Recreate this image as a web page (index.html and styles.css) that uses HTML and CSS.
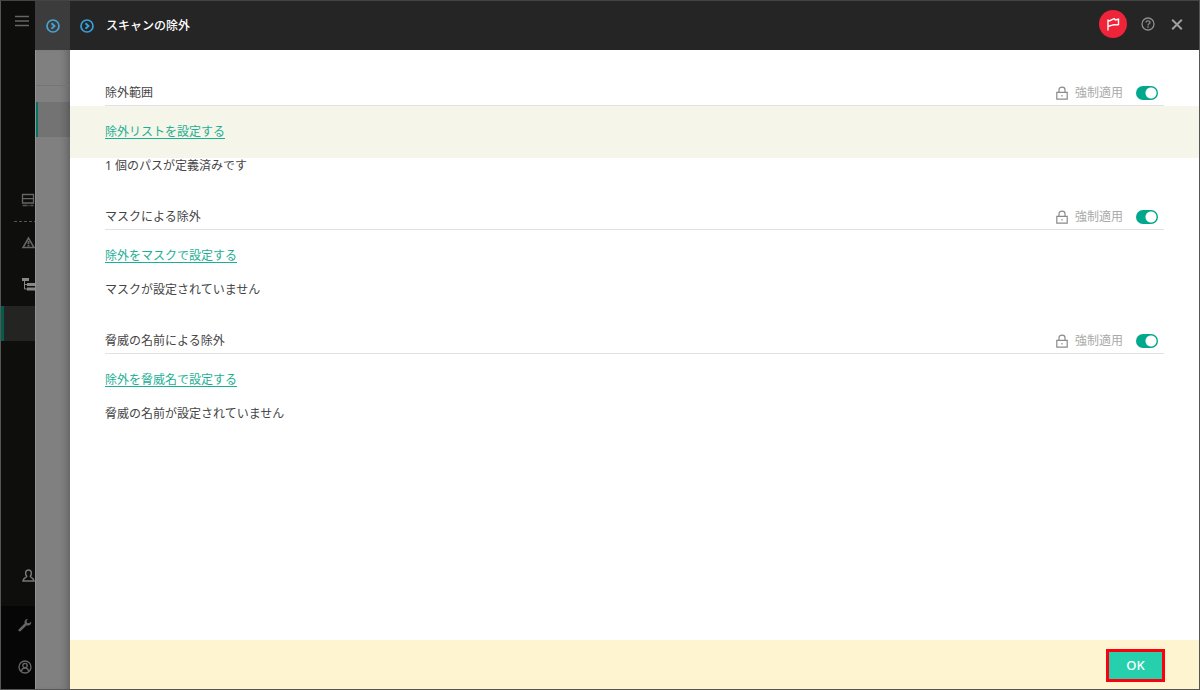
FILE: index.html
```html
<!DOCTYPE html>
<html lang="ja">
<head>
  <meta charset="UTF-8">
  <title>スキャンの除外</title>
  <link rel="stylesheet" href="styles.css">
</head>
<body>
  <div class="app">

    <!-- サイドバー -->
    <nav class="sidebar">
      <button class="icon-btn menu-btn" type="button" aria-label="メニュー">
        <svg width="14" height="12" viewBox="0 0 14 12"><path d="M0 1.500h14M0 6h14M0 10.500h14" stroke="#666" stroke-width="1.600"/></svg>
      </button>
      <ul class="nav-list">
        <li class="nav-item nav-server">
          <svg width="14" height="14" viewBox="0 0 14 14" fill="none" stroke="#666" stroke-width="1.300"><path d="M1.500 1.500h11v8.500h-11zM1.500 5.700h11"/><path d="M1.500 12.500h11" stroke-dasharray="5 1 1 1" stroke="#555"/></svg>
        </li>
        <li class="nav-item nav-alert">
          <svg width="14" height="14" viewBox="0 0 14 14" fill="none" stroke="#666" stroke-width="1.500"><path d="M7.500 2L2 11.500h11z"/><path d="M7.500 5v3M7.500 8.800v1.700" stroke-width="1.800"/></svg>
        </li>
        <li class="nav-item">
          <svg width="14" height="14" viewBox="0 0 14 14" fill="#888"><path d="M1 0h7v3H1zM6 5h8v3H6zM6 9.500h8v3H6z"/><path d="M3.500 3v8H6M3.500 6.500H6" fill="none" stroke="#888"/></svg>
        </li>
        <li class="nav-item active"></li>
      </ul>
      <div class="nav-item nav-user">
        <svg width="14" height="14" viewBox="0 0 14 14" fill="none" stroke="#777" stroke-width="1.500"><path d="M5.800 7.300C3.800 5.500 4.200 1 7.500 1s3.700 4.500 1.700 6.300c0 1 3.800 1.500 3.800 4.700H2c0-3.200 3.800-3.700 3.800-4.700z"/></svg>
      </div>
      <div class="nav-bottom">
        <svg width="14" height="14" viewBox="0 0 14 14"><path d="M1.800 12.200L8 6" stroke="#666" stroke-width="2.600" stroke-linecap="round"/><path d="M9.800 1C7.500 1 6 3 6.800 5.200L9 7.400c2.200.8 4.500-.8 4.300-3.600L11 5.300 9 4.900 8.500 3z" fill="#666"/></svg>
        <svg width="14" height="14" viewBox="0 0 14 14" fill="none" stroke="#666" stroke-width="1.300"><circle cx="7" cy="7" r="6"/><circle cx="7" cy="5.500" r="2.200"/><path d="M3.500 11c.3-2 1.500-3 3.500-3s3.200 1 3.500 3"/></svg>
      </div>
    </nav>

    <!-- 背面のパネル -->
    <div class="layer">
      <div class="layer-head">
        <svg width="14" height="14" viewBox="0 0 14 14" fill="none" stroke="#46a3d4"><circle cx="7" cy="7" r="6" stroke-width="1.700"/><path d="M5.500 4.300L8.500 7l-3 2.700" stroke-width="1.900"/></svg>
      </div>
      <div class="layer-body">
        <div class="layer-top"></div>
        <div class="layer-gap"></div>
        <div class="layer-active"></div>
      </div>
    </div>

    <!-- スキャンの除外 -->
    <main class="panel">
      <header class="panel-head">
        <svg width="14" height="14" viewBox="0 0 14 14" fill="none" stroke="#38a0dc"><circle cx="7" cy="7" r="6" stroke-width="1.700"/><path d="M5.500 4.300L8.500 7l-3 2.700" stroke-width="1.900"/></svg>
        <h1>スキャンの除外</h1>
        <div class="head-actions">
          <button class="icon-btn flag-btn" type="button" aria-label="フラグ">
            <svg width="14" height="14" viewBox="0 0 14 14" fill="none" stroke="#fff" stroke-width="1.400"><path d="M2 2.500V13.500M2 4c3.500-.2 3.500-2 6.500-2.300l.8 1.300 3.200-.8v5.300C9.500 8.700 9 6.800 6 8.200L2 9.500"/></svg>
          </button>
          <button class="icon-btn" type="button" aria-label="ヘルプ">
            <svg width="14" height="14" viewBox="0 0 14 14" fill="none" stroke="#8c8c8c" stroke-width="1.300"><circle cx="7" cy="7" r="6"/><path d="M5 5.600C5 3.200 9 3.200 9 5.500 9 6.900 7 6.800 7 8.400M7 9.300v1.400"/></svg>
          </button>
          <button class="icon-btn" type="button" aria-label="閉じる">
            <svg width="12" height="12" viewBox="0 0 12 12"><path d="M1.200 1.700l9.600 9.600M10.800 1.700L1.200 11.300" stroke="#a0a0a0" stroke-width="2"/></svg>
          </button>
        </div>
      </header>

      <div class="panel-body">
        <section class="group highlight">
          <div class="group-head">
            <h2>除外範囲</h2>
            <label class="enforce">
              <svg width="12" height="14" viewBox="0 0 12 14" fill="none" stroke="#8a8a8a" stroke-width="1.200"><path d="M.8 6.300h10.400v6.900H.8zM3 6V3.700C3 .2 9 .2 9 3.700V6M6 9v1.500"/></svg>
              強制適用
              <input class="toggle" type="checkbox" checked>
            </label>
          </div>
          <div class="group-link"><a href="#">除外リストを設定する</a></div>
          <p>1 個のパスが定義済みです</p>
        </section>

        <section class="group">
          <div class="group-head">
            <h2>マスクによる除外</h2>
            <label class="enforce">
              <svg width="12" height="14" viewBox="0 0 12 14" fill="none" stroke="#8a8a8a" stroke-width="1.200"><path d="M.8 6.300h10.400v6.900H.8zM3 6V3.700C3 .2 9 .2 9 3.700V6M6 9v1.500"/></svg>
              強制適用
              <input class="toggle" type="checkbox" checked>
            </label>
          </div>
          <div class="group-link"><a href="#">除外をマスクで設定する</a></div>
          <p>マスクが設定されていません</p>
        </section>

        <section class="group">
          <div class="group-head">
            <h2>脅威の名前による除外</h2>
            <label class="enforce">
              <svg width="12" height="14" viewBox="0 0 12 14" fill="none" stroke="#8a8a8a" stroke-width="1.200"><path d="M.8 6.300h10.400v6.900H.8zM3 6V3.700C3 .2 9 .2 9 3.700V6M6 9v1.500"/></svg>
              強制適用
              <input class="toggle" type="checkbox" checked>
            </label>
          </div>
          <div class="group-link"><a href="#">除外を脅威名で設定する</a></div>
          <p>脅威の名前が設定されていません</p>
        </section>
      </div>

      <footer class="panel-foot">
        <button class="ok-btn" type="button">OK</button>
      </footer>
    </main>

  </div>
</body>
</html>
```
FILE: styles.css
```css
* {
  box-sizing: border-box;
}

body {
  margin: 0;
  font-family: "Noto Sans", "Noto Sans CJK JP", sans-serif;
  font-size: 12px;
  line-height: 16px;
  color: #444;
}

svg {
  display: block;
  flex: none;
}

h1, h2, p, ul {
  margin: 0;
  padding: 0;
  font-size: 12px;
  font-weight: normal;
}

.app {
  display: grid;
  grid-template-columns: 34px 35px 1fr;
  min-height: 100vh;
  border: 1px solid #555;
  border-top-color: #444;
}

.icon-btn {
  display: flex;
  align-items: center;
  justify-content: center;
  padding: 0;
  border: 0;
  background: none;
  cursor: pointer;
}

/* サイドバー */
.sidebar {
  display: flex;
  flex-direction: column;
  background: #0e0e0c;
}

.menu-btn {
  width: 14px;
  height: 40px;
  margin-left: 14px;
}

.nav-list {
  margin-top: 137px;
  list-style: none;
}

.nav-item {
  display: flex;
  align-items: center;
  justify-content: flex-end;
  height: 42px;
}

.nav-server {
  height: 44px;
  background: linear-gradient(90deg, #555 60%, transparent 0) 0 100% / 5px 1px repeat-x;
  background-origin: content-box;
  background-clip: content-box;
  padding-left: 13px;
}

.nav-item.active {
  height: 35px;
  background: #242422;
  border-left: 3px solid #045c4c;
}

.nav-user {
  margin-top: auto;
  height: 60px;
}

.nav-bottom {
  display: flex;
  flex-direction: column;
  gap: 28px;
  padding: 12px 0 15px 17px;
  background: #060606;
}

/* 背面のパネル */
.layer {
  display: flex;
  flex-direction: column;
}

.layer-head {
  display: flex;
  align-items: center;
  justify-content: center;
  height: 49px;
  background: #3c3c3c;
}

.layer-body {
  flex: 1;
  background: #808080;
  border-left: 1px solid #929292;
  box-shadow: inset -8px 0 8px -6px #5c5c5c;
}

.layer-top {
  height: 36px;
  border-bottom: 1px solid #747474;
}

.layer-gap {
  height: 16px;
}

.layer-active {
  height: 35px;
  background: rgba(0, 0, 0, 0.1);
  border-left: 2px solid #047460;
}

/* メインパネル */
.panel {
  display: flex;
  flex-direction: column;
  background: #fff;
}

.panel-head {
  display: flex;
  align-items: center;
  gap: 12px;
  height: 49px;
  padding: 0 16px 0 10px;
  background: #252525;
}

.panel-head h1 {
  color: #fff;
  font-weight: 500;
}

.head-actions {
  display: flex;
  align-items: center;
  gap: 16px;
  height: 46px;
  margin-left: auto;
  align-self: flex-start;
}

.flag-btn {
  width: 28px;
  height: 28px;
  border-radius: 50%;
  background: #f02438;
  margin-right: -2px;
}

.panel-body {
  flex: 1;
  padding-top: 29px;
}

.group {
  margin-bottom: 29px;
}

.group-head {
  display: flex;
  align-items: center;
  justify-content: space-between;
  height: 27px;
  margin: 0 35px;
  padding-right: 6px;
  border-bottom: 1px solid #e2e2e2;
}

.enforce {
  display: flex;
  align-items: center;
  gap: 7px;
  color: #aaa;
}

.toggle {
  appearance: none;
  width: 22px;
  height: 14px;
  margin: 0 0 0 6px;
  border-radius: 7px;
  background: radial-gradient(circle at 15px 7px, #fff 5px, transparent 6px) #00a88e;
  cursor: pointer;
}

.toggle:not(:checked) {
  background: radial-gradient(circle at 7px 7px, #fff 5px, transparent 6px) #aaa;
}

.group-head h2,
.enforce {
  padding-top: 2px;
}

.group-link {
  display: flex;
  align-items: center;
  height: 52px;
  padding: 0 35px;
}

.group-link a {
  color: #1daf94;
  text-underline-offset: 2px;
}

.highlight .group-link {
  background: #f5f5e9;
}

.group p {
  padding: 0 35px;
}

.panel-foot {
  display: flex;
  justify-content: flex-end;
  padding: 9px 34px 7px;
  background: #fef5d0;
}

.ok-btn {
  width: 59px;
  height: 33px;
  padding: 0 0 2px;
  border: 3px solid #fa0010;
  background: #26d0ad;
  color: #fff;
  font: 500 13px/16px "Noto Sans", sans-serif;
  cursor: pointer;
}
```
